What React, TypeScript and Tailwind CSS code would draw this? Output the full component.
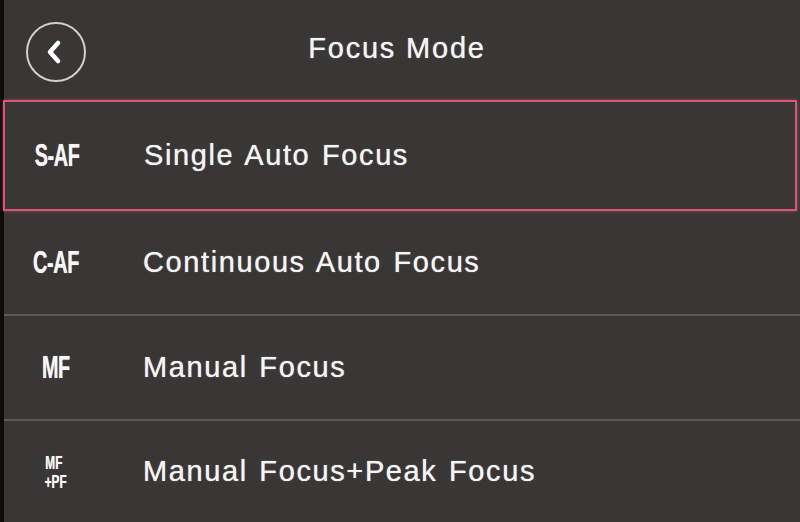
import React from "react";

const font = { fontFamily: '"Liberation Sans", Arial, sans-serif' };

function Code({ text }: { text: string }) {
  return (
    <div className="w-[104px] flex justify-center items-center shrink-0">
      <span
        className="inline-block font-bold text-[31px] leading-none text-[#f6f6f6] scale-x-[0.64] tracking-[-0.5px] [text-shadow:0_0_1px_rgba(255,255,255,0.7)]"
        style={font}
      >
        {text}
      </span>
    </div>
  );
}

function StackCode() {
  return (
    <div className="w-[104px] flex justify-center items-center shrink-0">
      <div
        className="flex flex-col items-center font-bold text-[19px] leading-[19px] text-[#f6f6f6] scale-x-[0.62] [text-shadow:0_0_1px_rgba(255,255,255,0.7)]"
        style={font}
      >
        <span className="-ml-[6px]">MF</span>
        <span>+PF</span>
      </div>
    </div>
  );
}

function Label({ text }: { text: string }) {
  return (
    <span
      className="text-[29px] leading-none text-[#f4f4f4] tracking-[1.6px] [word-spacing:2px] pl-[35px] [text-shadow:0_0_1px_rgba(255,255,255,0.8)]"
      style={font}
    >
      {text}
    </span>
  );
}

export default function App() {
  return (
    <div className="w-[800px] h-[522px] bg-[#393735] flex overflow-hidden">
      <div className="w-[4px] bg-[#0c0c0c] shrink-0" />
      <div className="flex-1 flex flex-col">
        <div className="h-[100px] flex items-center relative shrink-0">
          <div className="ml-[22px] mt-[4px] w-[60px] h-[60px] rounded-full border-2 border-[#cfcfcf] flex items-center justify-center">
            <svg width="22" height="26" viewBox="0 0 22 26" className="-ml-[3px]">
              <path
                d="M14 4 L6 13 L14 22"
                fill="none"
                stroke="#ffffff"
                strokeWidth="4.5"
                strokeLinecap="round"
                strokeLinejoin="round"
              />
            </svg>
          </div>
          <div className="absolute inset-0 flex items-center justify-center">
            <span
              className="text-[29px] leading-none text-[#f4f4f4] tracking-[1.8px] -mt-[4px] -ml-[10px] [text-shadow:0_0_1px_rgba(255,255,255,0.8)]"
              style={font}
            >
              Focus Mode
            </span>
          </div>
        </div>
        <div className="h-[111px] mr-[3px] -ml-[1px] border-2 border-[#d9567a] shadow-[0_0_3px_rgba(217,86,122,0.6)] flex items-center shrink-0">
          <Code text="S-AF" />
          <Label text="Single Auto Focus" />
        </div>
        <div className="h-[103px] flex items-center shrink-0">
          <Code text="C-AF" />
          <Label text="Continuous Auto Focus" />
        </div>
        <div className="h-[2px] bg-[#5c5a58] shrink-0" />
        <div className="h-[103px] flex items-center shrink-0">
          <Code text="MF" />
          <Label text="Manual Focus" />
        </div>
        <div className="h-[2px] bg-[#5c5a58] shrink-0" />
        <div className="flex-1 flex items-center">
          <StackCode />
          <Label text="Manual Focus+Peak Focus" />
        </div>
      </div>
    </div>
  );
}
